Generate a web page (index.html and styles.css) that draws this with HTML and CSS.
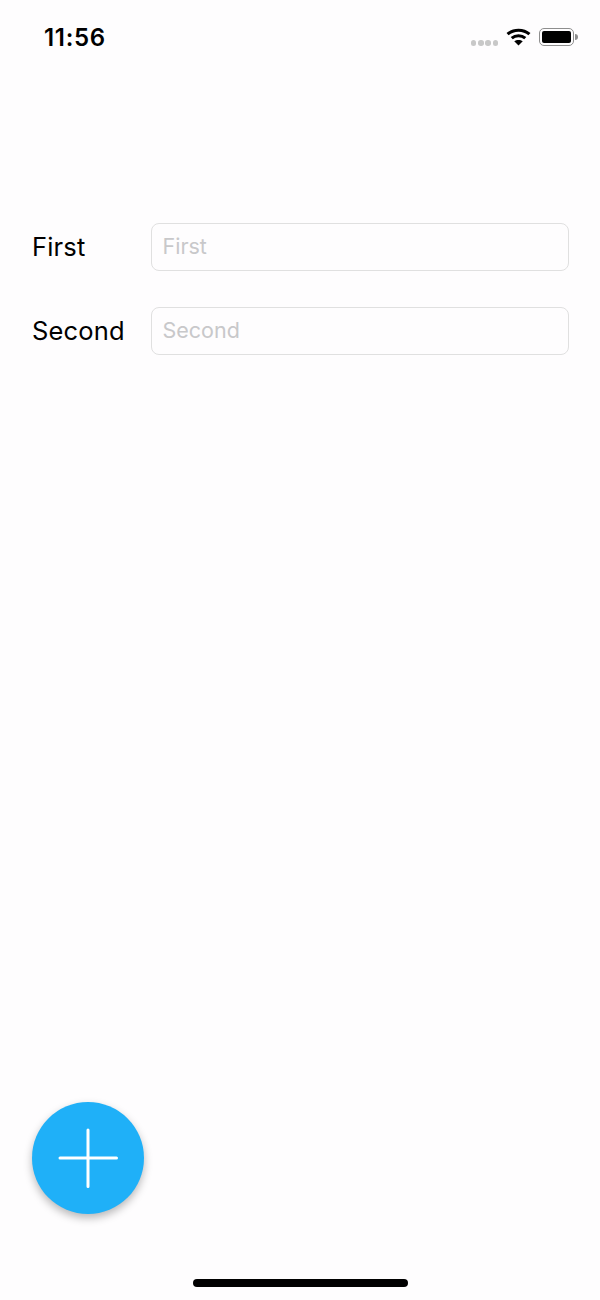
FILE: index.html
```html
<!DOCTYPE html>
<html>
<head>
	<title>Form</title>
	<meta charset="utf-8">
	<meta name="viewport" content="width=device-width, initial-scale=1">
	<link rel="stylesheet" href="styles.css">
</head>
<body>
    <div class="status">
        <span class="time">11:56</span>
        <div class="status-icons">
            <div class="signal"><i></i><i></i><i></i><i></i></div>
            <svg class="wifi" width="25" height="18" viewBox="0 0 24 18" preserveAspectRatio="none">
                <path d="M1.500 6.200C7.400 .9 16.600 .9 22.500 6.200" fill="none" stroke="#000" stroke-width="3"/>
                <path d="M5.500 10.200C9.200 7 14.800 7 18.500 10.200" fill="none" stroke="#000" stroke-width="3"/>
                <path d="M12 17.500L7.900 13.300C10.300 11.400 13.700 11.400 16.100 13.300Z" fill="#000"/>
            </svg>
            <div class="battery"><div class="battery-level"></div></div>
            <div class="battery-tip"></div>
        </div>
    </div>

    <form class="fields" onsubmit="return false;">
        <div class="row">
            <label for="first">First</label>
            <input type="text" id="first" name="first" placeholder="First">
        </div>
        <div class="row">
            <label for="second">Second</label>
            <input type="text" id="second" name="second" placeholder="Second">
        </div>
    </form>

    <button class="fab" aria-label="Add">
        <svg width="60" height="60" viewBox="0 0 60 60">
            <path d="M30 2V58.500M2 30H58.500" stroke="#fff" stroke-width="3" stroke-linecap="round"/>
        </svg>
    </button>

    <div class="home-bar"></div>
</body>
</html>
```

FILE: styles.css
```css
body {
	font-family: Inter, "Liberation Sans", sans-serif;
	background-color: #fefdfe;
	margin: 0;
	height: 1300px;
	display: flex;
	flex-direction: column;
	overflow: hidden;
}
.status {
	display: flex;
	justify-content: space-between;
	align-items: center;
	height: 28px;
	padding: 23px 22px 0 44px;
}
.time {
	font-size: 24px;
	font-weight: 600;
	letter-spacing: 0.7px;
	color: #000;
}
.status-icons {
	display: flex;
	align-items: center;
}
.signal {
	display: flex;
	gap: 1.700px;
	margin: 12px 8px 0 0;
}
.signal i {
	width: 5.500px;
	height: 5.500px;
	border-radius: 50%;
	background-color: #c8c8c8;
}
.wifi {
	margin-right: 8px;
}
.battery {
	box-sizing: border-box;
	width: 35px;
	height: 18px;
	padding: 2px;
	border: 1.500px solid #8e8e8e;
	border-radius: 5px;
}
.battery-level {
	height: 100%;
	background-color: #000;
	border-radius: 2px;
}
.battery-tip {
	width: 3px;
	height: 6px;
	margin-left: 1px;
	background-color: #8e8e8e;
	border-radius: 0 3px 3px 0;
}
.fields {
	display: flex;
	flex-direction: column;
	gap: 36px;
	margin-top: 172px;
	padding: 0 31px 0 32px;
}
.row {
	display: flex;
	align-items: center;
}
.row label {
	width: 119px;
	margin-top: -2px;
	font-size: 25.500px;
	letter-spacing: 0.15px;
	color: #000;
}
.row input {
	box-sizing: border-box;
	flex: 1;
	min-width: 0;
	height: 48px;
	padding: 0 10px 2px 10.500px;
	font-family: inherit;
	font-size: 21.500px;
	background: transparent;
	border: 1px solid #e0e0e0;
	border-radius: 8px;
	outline: none;
}
.row input::placeholder {
	color: #c8c8ca;
	opacity: 1;
}
.fab {
	display: flex;
	align-items: center;
	justify-content: center;
	width: 112px;
	height: 112px;
	margin: auto 0 0 32px;
	padding: 0;
	border: none;
	border-radius: 50%;
	background-color: #1fb0f8;
	box-shadow: 0 4px 8px rgba(0, 0, 0, 0.28);
}
.home-bar {
	width: 215px;
	height: 8px;
	margin: 65px auto 13px;
	border-radius: 4px;
	background-color: #000;
}
```
